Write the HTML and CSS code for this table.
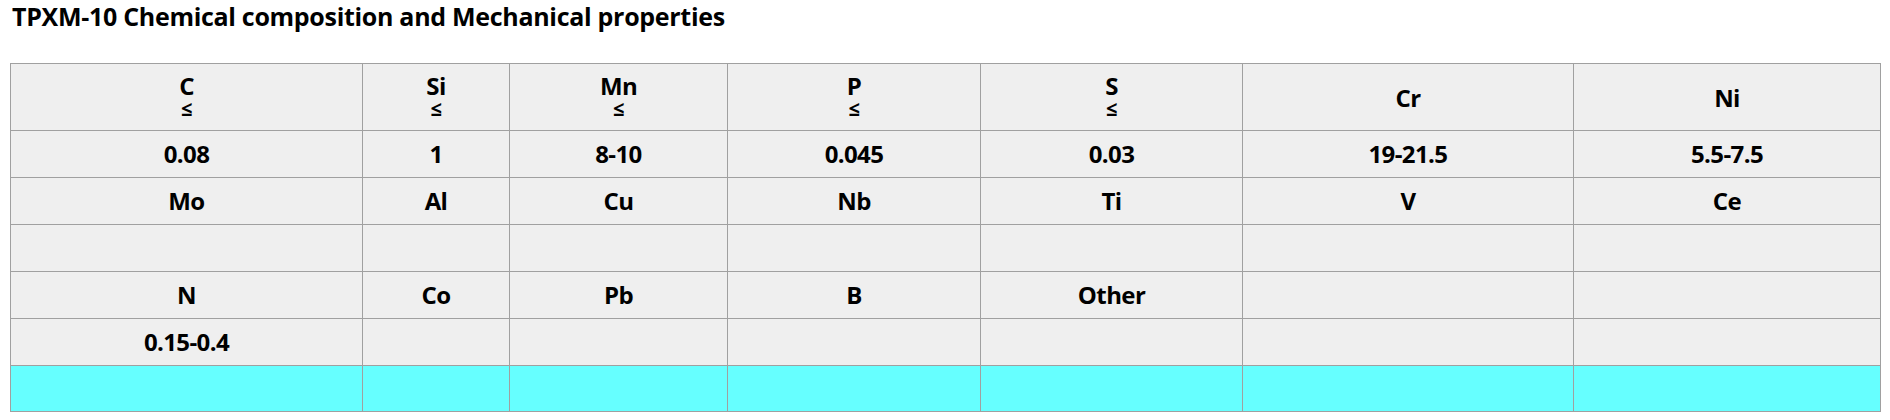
FILE: index.html
```html
<!DOCTYPE html>
<html>
<head>
<meta charset="utf-8">
<link rel="stylesheet" href="styles.css">
</head>
<body>
<h3 class="title">TPXM-10 Chemical composition and Mechanical properties</h3>
<table class="chem">
  <colgroup>
    <col class="c1"><col class="c2"><col class="c3"><col class="c4"><col class="c5"><col class="c6"><col class="c7">
  </colgroup>
  <tr class="head">
    <td>C<br><span class="le">≤</span></td><td>Si<br><span class="le">≤</span></td><td>Mn<br><span class="le">≤</span></td><td>P<br><span class="le">≤</span></td><td>S<br><span class="le">≤</span></td><td>Cr</td><td>Ni</td>
  </tr>
  <tr>
    <td>0.08</td><td>1</td><td>8-10</td><td>0.045</td><td>0.03</td><td>19-21.5</td><td>5.5-7.5</td>
  </tr>
  <tr>
    <td>Mo</td><td>Al</td><td>Cu</td><td>Nb</td><td>Ti</td><td>V</td><td>Ce</td>
  </tr>
  <tr>
    <td></td><td></td><td></td><td></td><td></td><td></td><td></td>
  </tr>
  <tr>
    <td>N</td><td>Co</td><td>Pb</td><td>B</td><td>Other</td><td></td><td></td>
  </tr>
  <tr>
    <td>0.15-0.4</td><td></td><td></td><td></td><td></td><td></td><td></td>
  </tr>
  <tr class="cyan">
    <td></td><td></td><td></td><td></td><td></td><td></td><td></td>
  </tr>
</table>
</body>
</html>
```

FILE: styles.css
```css
html, body {
  margin: 0;
  padding: 0;
  background: #ffffff;
}
body {
  padding: 0 10px;
  font-family: "Open Sans", "Noto Sans", "DejaVu Sans", sans-serif;
  color: #000;
}
.title {
  margin: 0 0 31px 2px;
  font-size: 25px;
  line-height: 32px;
  font-weight: 700;
  letter-spacing: -0.3px;
}
.chem {
  border-collapse: collapse;
  table-layout: fixed;
  width: 1870px;
}
.c1 { width: 352px; }
.c2 { width: 147px; }
.c3 { width: 218px; }
.c4 { width: 253px; }
.c5 { width: 262px; }
.c6 { width: 331px; }
.c7 { width: 307px; }
.chem td {
  border: 1px solid #a0a0a0;
  background: #efefef;
  text-align: center;
  vertical-align: middle;
  font-size: 24px;
  font-weight: 700;
  letter-spacing: -0.6px;
  line-height: 30px;
  height: 46px;
  padding: 0;
}
.chem .head td {
  height: 66px;
  line-height: 21px;
}
.chem .le {
  font-size: 20px;
}
.chem .cyan td {
  background: #66ffff;
  height: 45px;
}
```
